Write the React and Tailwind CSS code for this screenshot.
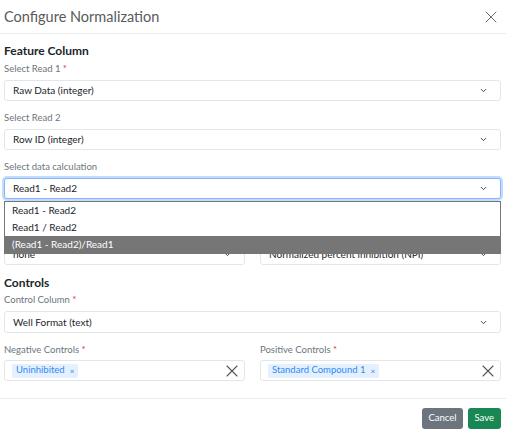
import { X, ChevronDown } from "lucide-react";

const font = { fontFamily: "Lato, 'Noto Sans', sans-serif" };

function Label({ children, required, className = "" }) {
  return (
    <div className={`h-[14px] leading-[14px] text-[9.5px] text-[#6c757d] ${className}`}>
      {children}
      {required && <span className="text-[#dc3545]"> *</span>}
    </div>
  );
}

function Select({ value, focus, className = "" }) {
  return (
    <div
      className={`h-[21px] flex items-center justify-between pl-[8px] pr-[12px] rounded-[3px] bg-white text-[10px] text-[#212529] border ${
        focus ? "border-[#86b7fe] ring-2 ring-[#c2dbfe]" : "border-[#e3e6e9]"
      } ${className}`}
    >
      <span className="truncate">{value}</span>
      <ChevronDown className="w-[9px] h-[9px] text-[#343a40] shrink-0" strokeWidth={2.5} />
    </div>
  );
}

function Multi({ tag, className = "" }) {
  return (
    <div className={`h-[21px] flex items-center justify-between pl-[7px] pr-[2px] rounded-[3px] border border-[#e3e6e9] ${className}`}>
      <span className="h-[14px] flex items-center gap-[5px] px-[4px] rounded-[2px] bg-[#e4f0fd] text-[#2f8af5] text-[9.5px]">
        {tag}
        <span className="text-[8px]">×</span>
      </span>
      <X className="w-[20px] h-[20px] text-[#555]" strokeWidth={1.3} />
    </div>
  );
}

export default function App() {
  return (
    <div className="relative w-[506px] h-[434px] bg-white overflow-hidden" style={font}>
      {/* Header */}
      <div className="h-[34px] flex items-center justify-between pl-[4px] pr-[5px] border-b border-[#e9ecef]">
        <h1 className="text-[14.5px] text-[#5a5a5a]">Configure Normalization</h1>
        <X className="w-[20px] h-[20px] text-[#6c6c6c]" strokeWidth={1.2} />
      </div>

      {/* Body */}
      <div className="px-[4px] pr-[5px]">
        <h2 className="mt-[8px] h-[18px] leading-[18px] text-[12px] font-bold text-[#212529]">Feature Column</h2>
        <Label required className="mt-[2px]">Select Read 1</Label>
        <Select value="Raw Data (integer)" className="mt-[4px]" />
        <Label className="mt-[10px]">Select Read 2</Label>
        <Select value="Row ID (integer)" className="mt-[4px]" />
        <Label className="mt-[10px]">Select data calculation</Label>
        <Select value="Read1 - Read2" focus className="mt-[4px]" />

        <div className="grid grid-cols-2 gap-[15px] mt-[27px]">
          <div>
            <Label>Background Subtraction</Label>
            <Select value="none" className="mt-[4px]" />
          </div>
          <div>
            <Label>Normalization Method</Label>
            <Select value="Normalized percent inhibition (NPI)" className="mt-[4px]" />
          </div>
        </div>

        <h2 className="mt-[9px] h-[18px] leading-[18px] text-[12px] font-bold text-[#212529]">Controls</h2>
        <Label required className="mt-[1px]">Control Column</Label>
        <Select value="Well Format (text)" className="mt-[4px] h-[22px]" />

        <div className="grid grid-cols-2 gap-[15px] mt-[10px]">
          <div>
            <Label required>Negative Controls</Label>
            <Multi tag="Uninhibited" className="mt-[3px]" />
          </div>
          <div>
            <Label required>Positive Controls</Label>
            <Multi tag="Standard Compound 1" className="mt-[3px]" />
          </div>
        </div>
      </div>

      {/* Footer */}
      <div className="mt-[17px] border-t border-[#e9ecef] flex justify-end gap-[5px] pt-[9px] pr-[5px]">
        <button className="h-[21px] px-[6px] rounded-[3px] bg-[#6c757d] text-white text-[9.5px]">Cancel</button>
        <button className="h-[21px] px-[7px] rounded-[3px] bg-[#198754] text-white text-[9.5px]">Save</button>
      </div>

      {/* Native dropdown list */}
      <div className="absolute left-[4px] top-[201px] w-[497px] border border-[#767676] bg-white text-[10px] text-[#212529]">
        <div className="h-[17px] leading-[17px] pl-[7px]">Read1 - Read2</div>
        <div className="h-[17px] leading-[17px] pl-[7px]">Read1 / Read2</div>
        <div className="h-[17px] leading-[17px] pl-[7px] bg-[#767676] text-white">(Read1 - Read2)/Read1</div>
      </div>
    </div>
  );
}
